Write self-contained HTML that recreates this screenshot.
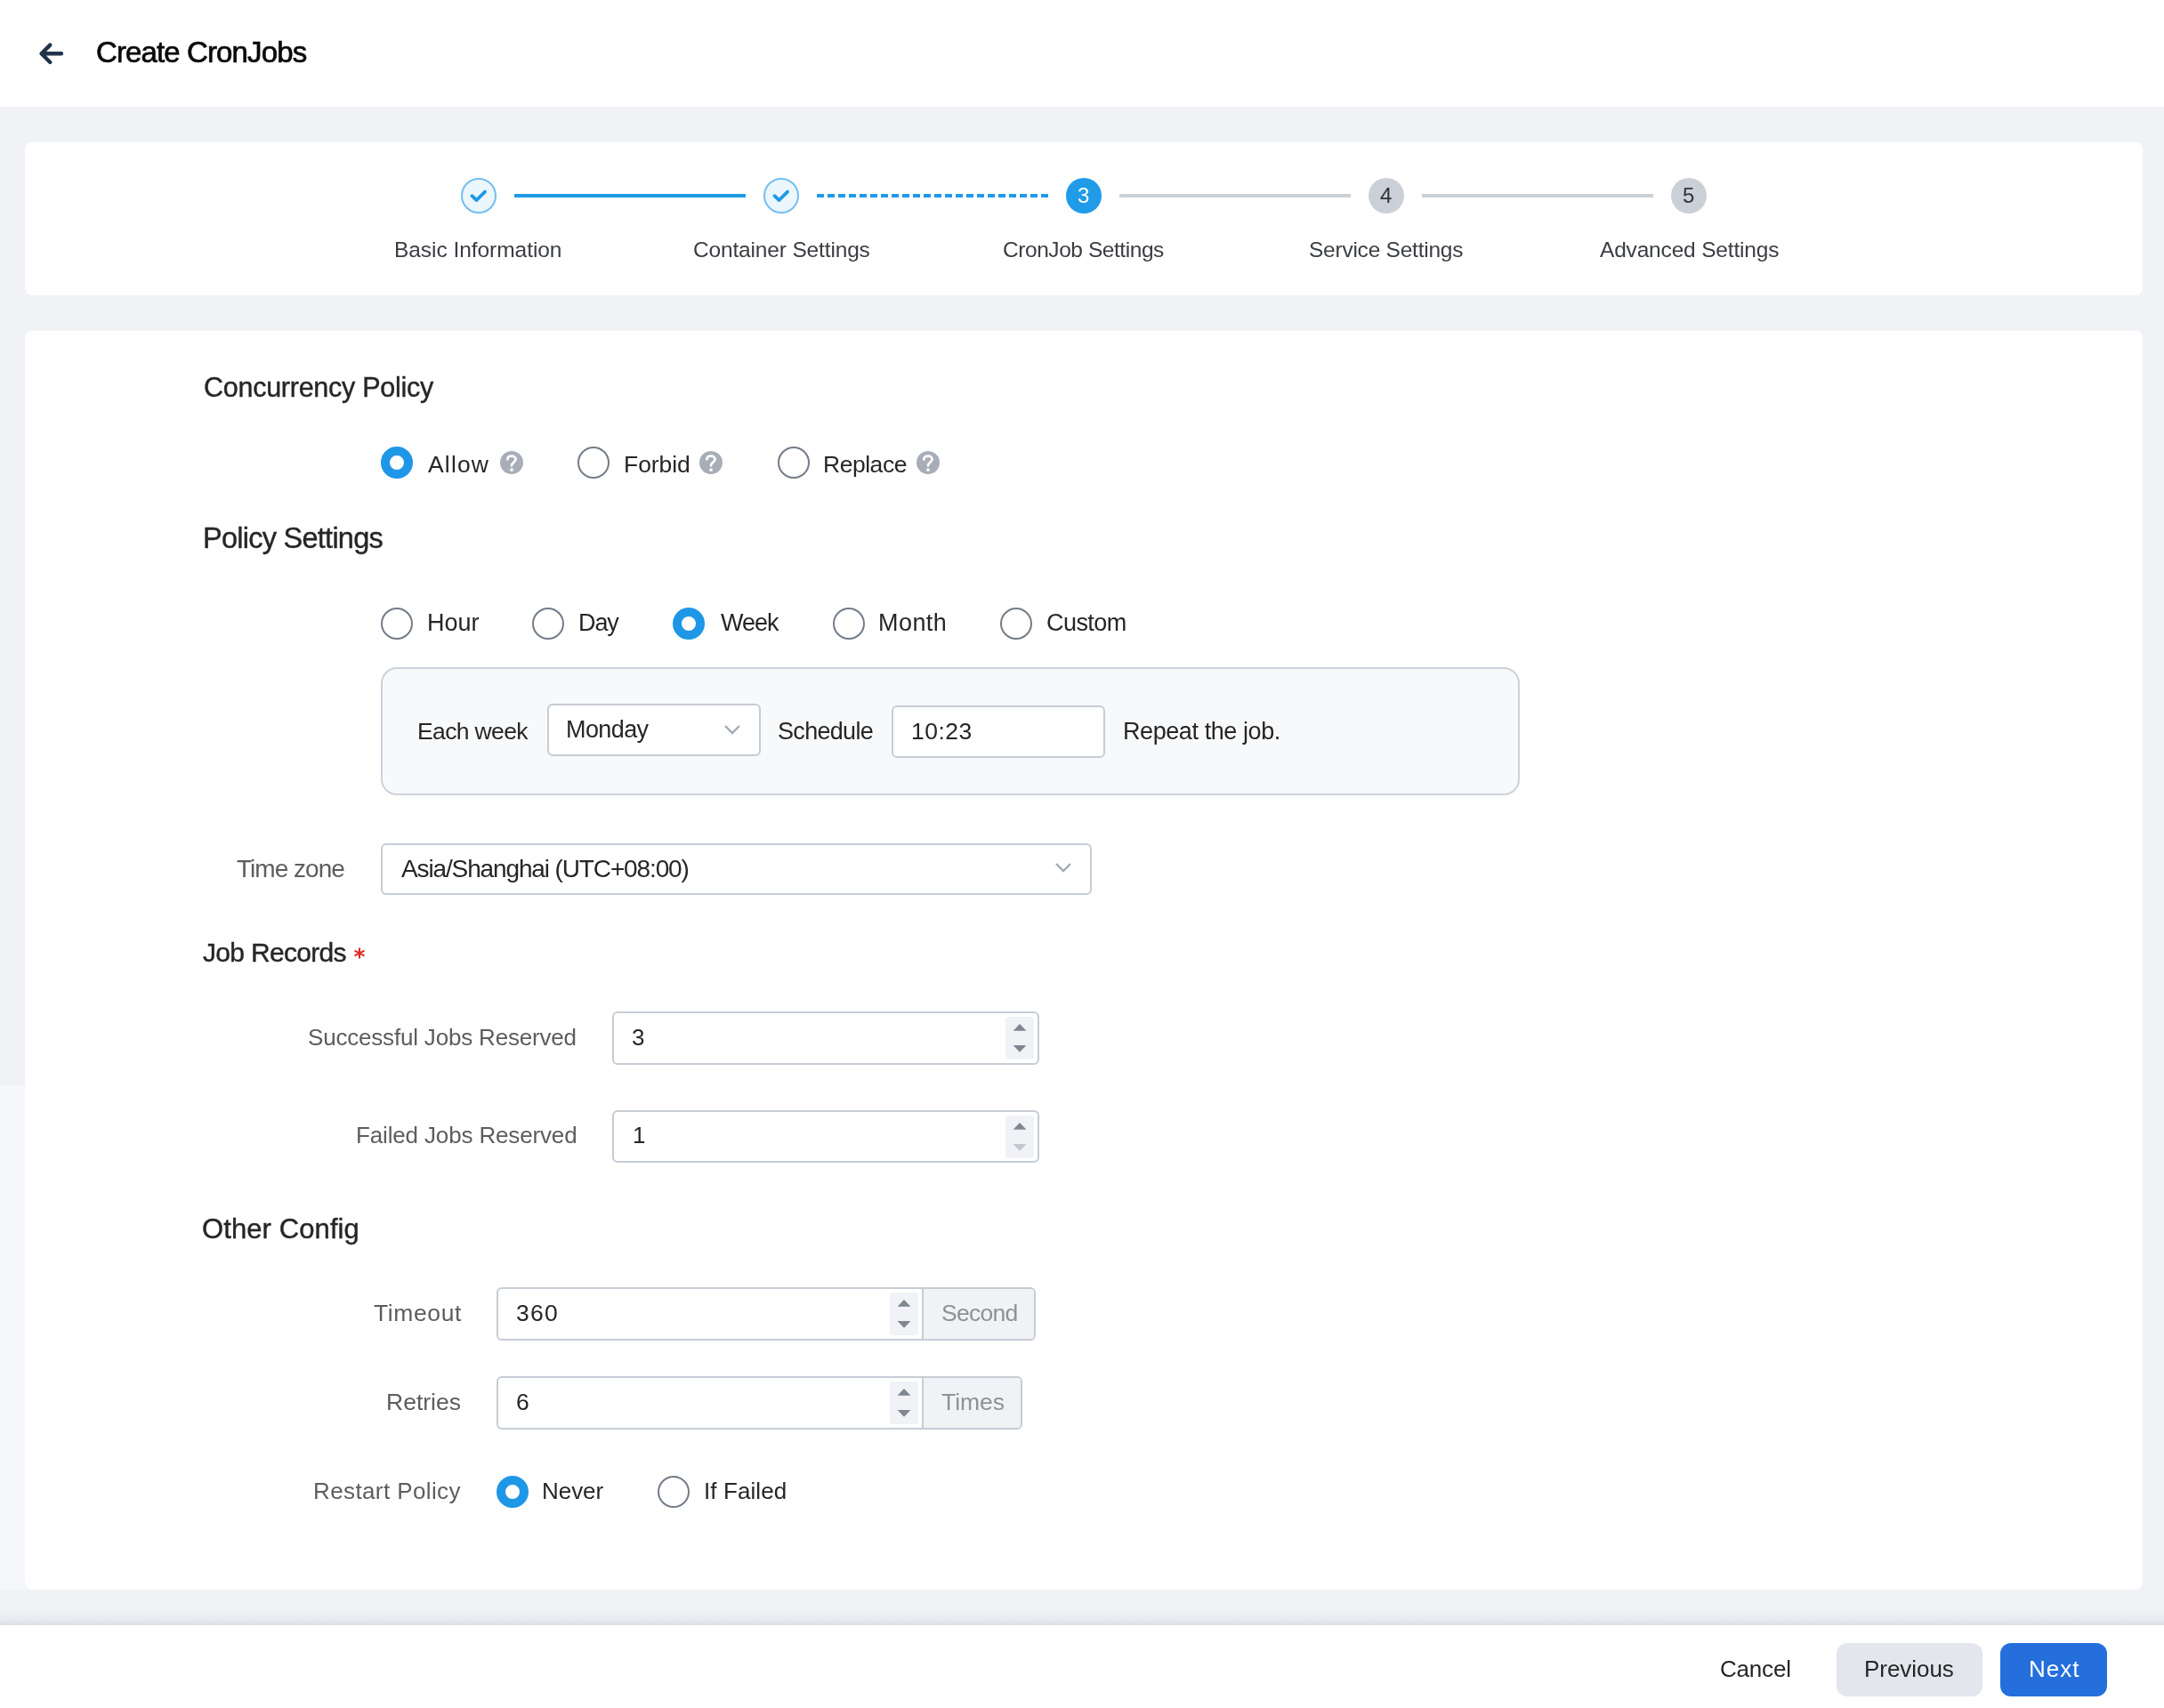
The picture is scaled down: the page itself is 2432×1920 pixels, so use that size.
<!DOCTYPE html>
<html><head><meta charset="utf-8"><title>Create CronJobs</title>
<style>
html,body{margin:0;padding:0}
body{width:2432px;height:1920px;position:relative;overflow:hidden;background:#f0f2f6;font-family:"Liberation Sans",sans-serif}
.abs{position:absolute;box-sizing:content-box}
.t{position:absolute;line-height:1;white-space:nowrap;will-change:transform}
.hdr{position:absolute;left:0;top:0;width:2432px;height:120px;background:#fff}
.card{position:absolute;left:28px;width:2380px;background:#fff;border-radius:8px}
</style></head><body>
<div class="hdr"></div>
<svg class="abs" style="left:0;top:0" width="120" height="120"><path d="M56.3,50.6 L46.6,60.3 L56.3,70 M46.6,60.3 H69" fill="none" stroke="#1f3349" stroke-width="4.4" stroke-linecap="round" stroke-linejoin="round"/></svg>
<div class="t" style="left:108.4px;top:41.7px;font-size:33.0px;letter-spacing:-0.88px;color:#0a0a0a;-webkit-text-stroke:0.7px #0a0a0a;">Create CronJobs</div>
<div class="card" style="top:160px;height:172px"></div>
<div class="abs" style="left:578px;top:218px;width:260px;height:4px;background:#1f9ae8"></div>
<div class="abs" style="left:918px;top:218px;width:260px;height:4px;background:repeating-linear-gradient(90deg,#1f9ae8 0 8px,transparent 8px 12px)"></div>
<div class="abs" style="left:1258px;top:218px;width:260px;height:4px;background:#cbd0d8"></div>
<div class="abs" style="left:1598px;top:218px;width:260px;height:4px;background:#cbd0d8"></div>
<div class="abs" style="left:518px;top:200px;width:36px;height:36px;border-radius:50%;border:2px solid #74bff0;background:#ecf6fd"></div>
<svg class="abs" style="left:518px;top:200px" width="40" height="40"><path d="M12.4,20.2 L17.6,25 L27,15.6" fill="none" stroke="#1f99e6" stroke-width="3.8" stroke-linecap="round" stroke-linejoin="round"/></svg>
<div class="abs" style="left:858px;top:200px;width:36px;height:36px;border-radius:50%;border:2px solid #74bff0;background:#ecf6fd"></div>
<svg class="abs" style="left:858px;top:200px" width="40" height="40"><path d="M12.4,20.2 L17.6,25 L27,15.6" fill="none" stroke="#1f99e6" stroke-width="3.8" stroke-linecap="round" stroke-linejoin="round"/></svg>
<div class="abs" style="left:1198px;top:200px;width:40px;height:40px;border-radius:50%;background:#209be8"></div>
<div class="abs" style="left:1538px;top:200px;width:40px;height:40px;border-radius:50%;background:#cbd0d8"></div>
<div class="abs" style="left:1878px;top:200px;width:40px;height:40px;border-radius:50%;background:#cbd0d8"></div>
<div class="t" style="left:1211.3px;top:207.7px;font-size:24.0px;color:#ffffff;">3</div>
<div class="t" style="left:1551.3px;top:207.7px;font-size:24.0px;color:#2f3338;">4</div>
<div class="t" style="left:1891.3px;top:207.7px;font-size:24.0px;color:#2f3338;">5</div>
<div class="t" style="left:443.0px;top:268.5px;font-size:24.5px;letter-spacing:-0.05px;color:#3a3d42;">Basic Information</div>
<div class="t" style="left:778.6px;top:268.5px;font-size:24.5px;letter-spacing:-0.16px;color:#3a3d42;">Container Settings</div>
<div class="t" style="left:1127.0px;top:268.5px;font-size:24.5px;letter-spacing:-0.44px;color:#3a3d42;">CronJob Settings</div>
<div class="t" style="left:1470.6px;top:268.5px;font-size:24.5px;letter-spacing:-0.24px;color:#3a3d42;">Service Settings</div>
<div class="t" style="left:1797.8px;top:268.5px;font-size:24.5px;letter-spacing:-0.18px;color:#3a3d42;">Advanced Settings</div>
<div class="card" style="top:372px;height:1415px"></div>
<div class="abs" style="left:0;top:1220px;width:28px;height:567px;background:#f5f7fb"></div>
<div class="t" style="left:228.6px;top:420.2px;font-size:30.5px;letter-spacing:-0.26px;color:#262626;-webkit-text-stroke:0.4px #262626;">Concurrency Policy</div>
<div class="abs" style="left:428.0px;top:502.0px;width:16px;height:16px;border-radius:50%;border:10px solid #1f97e7;background:#fff"></div>
<div class="t" style="left:481.4px;top:508.6px;font-size:26.5px;letter-spacing:1.17px;color:#262626;">Allow</div>
<svg class="abs" style="left:562.0px;top:506.7px" width="26" height="26"><circle cx="13" cy="13" r="13" fill="#a8aeb7"/><path d="M8.3,9.3 C8.5,7.1 10.4,5.7 13,5.7 C15.7,5.7 17.6,7.2 17.6,9.3 C17.6,11.4 15.8,12.2 14.5,13.4 C13.4,14.4 13,15.2 13,16.3" fill="none" stroke="#fff" stroke-width="2.7" stroke-linecap="round"/><circle cx="13" cy="21.1" r="1.9" fill="#fff"/></svg>
<div class="abs" style="left:649.0px;top:502.0px;width:32px;height:32px;border-radius:50%;border:2px solid #737c88;background:#fff"></div>
<div class="t" style="left:700.6px;top:508.6px;font-size:26.5px;letter-spacing:-0.06px;color:#262626;">Forbid</div>
<svg class="abs" style="left:786.4px;top:506.7px" width="26" height="26"><circle cx="13" cy="13" r="13" fill="#a8aeb7"/><path d="M8.3,9.3 C8.5,7.1 10.4,5.7 13,5.7 C15.7,5.7 17.6,7.2 17.6,9.3 C17.6,11.4 15.8,12.2 14.5,13.4 C13.4,14.4 13,15.2 13,16.3" fill="none" stroke="#fff" stroke-width="2.7" stroke-linecap="round"/><circle cx="13" cy="21.1" r="1.9" fill="#fff"/></svg>
<div class="abs" style="left:874.0px;top:502.0px;width:32px;height:32px;border-radius:50%;border:2px solid #737c88;background:#fff"></div>
<div class="t" style="left:925.4px;top:508.6px;font-size:26.5px;letter-spacing:-0.47px;color:#262626;">Replace</div>
<svg class="abs" style="left:1030.2px;top:506.7px" width="26" height="26"><circle cx="13" cy="13" r="13" fill="#a8aeb7"/><path d="M8.3,9.3 C8.5,7.1 10.4,5.7 13,5.7 C15.7,5.7 17.6,7.2 17.6,9.3 C17.6,11.4 15.8,12.2 14.5,13.4 C13.4,14.4 13,15.2 13,16.3" fill="none" stroke="#fff" stroke-width="2.7" stroke-linecap="round"/><circle cx="13" cy="21.1" r="1.9" fill="#fff"/></svg>
<div class="t" style="left:227.6px;top:588.7px;font-size:32.5px;letter-spacing:-0.74px;color:#262626;-webkit-text-stroke:0.4px #262626;">Policy Settings</div>
<div class="abs" style="left:428.0px;top:683.0px;width:32px;height:32px;border-radius:50%;border:2px solid #737c88;background:#fff"></div>
<div class="t" style="left:479.6px;top:686.9px;font-size:27.0px;letter-spacing:-0.03px;color:#262626;">Hour</div>
<div class="abs" style="left:598.0px;top:683.0px;width:32px;height:32px;border-radius:50%;border:2px solid #737c88;background:#fff"></div>
<div class="t" style="left:650.2px;top:686.9px;font-size:27.0px;letter-spacing:-1.10px;color:#262626;">Day</div>
<div class="abs" style="left:756.0px;top:683.0px;width:16px;height:16px;border-radius:50%;border:10px solid #1f97e7;background:#fff"></div>
<div class="t" style="left:809.6px;top:686.9px;font-size:27.0px;letter-spacing:-1.01px;color:#262626;">Week</div>
<div class="abs" style="left:936.0px;top:683.0px;width:32px;height:32px;border-radius:50%;border:2px solid #737c88;background:#fff"></div>
<div class="t" style="left:987.0px;top:686.9px;font-size:27.0px;letter-spacing:0.45px;color:#262626;">Month</div>
<div class="abs" style="left:1124.0px;top:683.0px;width:32px;height:32px;border-radius:50%;border:2px solid #737c88;background:#fff"></div>
<div class="t" style="left:1176.2px;top:686.9px;font-size:27.0px;letter-spacing:-0.56px;color:#262626;">Custom</div>
<div class="abs" style="left:428px;top:750px;width:1276px;height:140px;border:2px solid #cdd2da;border-radius:18px;background:#f8f9fb"></div>
<div class="t" style="left:468.8px;top:808.6px;font-size:26.5px;letter-spacing:-0.64px;color:#262626;">Each week</div>
<div class="abs" style="left:615px;top:791px;width:236px;height:55px;border:2px solid #c6ccd5;border-radius:6px;background:#fff"></div>
<div class="t" style="left:635.6px;top:807.1px;font-size:27.0px;letter-spacing:-0.60px;color:#262626;">Monday</div>
<svg class="abs" style="left:810px;top:810px" width="26" height="20"><path d="M5,6 L13,14 L21,6" fill="none" stroke="#a3aab4" stroke-width="2.4"/></svg>
<div class="t" style="left:873.8px;top:808.9px;font-size:27.0px;letter-spacing:-0.69px;color:#262626;">Schedule</div>
<div class="abs" style="left:1002px;top:793px;width:236px;height:55px;border:2px solid #c6ccd5;border-radius:6px;background:#fff"></div>
<div class="t" style="left:1024.2px;top:809.4px;font-size:26.5px;letter-spacing:0.51px;color:#262626;">10:23</div>
<div class="t" style="left:1261.6px;top:808.9px;font-size:27.0px;letter-spacing:-0.42px;color:#262626;">Repeat the job.</div>
<div class="t" style="left:266.0px;top:962.7px;font-size:28.0px;letter-spacing:-0.98px;color:#5c5d60;">Time zone</div>
<div class="abs" style="left:428px;top:948px;width:795px;height:54px;border:2px solid #c6ccd5;border-radius:6px;background:#fff"></div>
<div class="t" style="left:451.2px;top:962.7px;font-size:28.0px;letter-spacing:-1.13px;color:#262626;">Asia/Shanghai (UTC+08:00)</div>
<svg class="abs" style="left:1182px;top:965px" width="26" height="20"><path d="M5,6 L13,14 L21,6" fill="none" stroke="#a3aab4" stroke-width="2.4"/></svg>
<div class="t" style="left:227.6px;top:1055.6px;font-size:30.0px;letter-spacing:-0.68px;color:#262626;-webkit-text-stroke:0.4px #262626;">Job Records</div>
<svg class="abs" style="left:396px;top:1064px" width="16" height="15"><g stroke="#e02a2a" stroke-width="2.1" stroke-linecap="butt"><path d="M8,1.5 V13.5"/><path d="M2.5,4.6 L13.5,10.4"/><path d="M2.5,10.4 L13.5,4.6"/></g></svg>
<div class="t" style="left:346.0px;top:1153.0px;font-size:26.0px;letter-spacing:-0.19px;color:#5c5d60;">Successful Jobs Reserved</div>
<div class="abs" style="left:688px;top:1137px;width:476px;height:56px;border:2px solid #c6ccd5;border-radius:6px;background:#fff"></div>
<div class="abs" style="left:1130px;top:1143px;width:32px;height:48px;border-radius:4px;background:#f1f2f6"></div><svg class="abs" style="left:1130px;top:1143px" width="32" height="48"><path d="M8.6,15.8 L16,8 L23.4,15.8 Z" fill="#7f8790"/><path d="M8.6,32 L16,39.8 L23.4,32 Z" fill="#7f8790"/></svg>
<div class="t" style="left:710.1px;top:1153.0px;font-size:26.0px;letter-spacing:0.00px;color:#262626;">3</div>
<div class="t" style="left:399.8px;top:1263.0px;font-size:26.0px;letter-spacing:-0.15px;color:#5c5d60;">Failed Jobs Reserved</div>
<div class="abs" style="left:688px;top:1248px;width:476px;height:55px;border:2px solid #c6ccd5;border-radius:6px;background:#fff"></div>
<div class="abs" style="left:1130px;top:1254px;width:32px;height:48px;border-radius:4px;background:#f1f2f6"></div><svg class="abs" style="left:1130px;top:1254px" width="32" height="48"><path d="M8.6,15.8 L16,8 L23.4,15.8 Z" fill="#7f8790"/><path d="M8.6,32 L16,39.8 L23.4,32 Z" fill="#c3c8cf"/></svg>
<div class="t" style="left:710.5px;top:1263.0px;font-size:26.0px;letter-spacing:0.00px;color:#262626;">1</div>
<div class="t" style="left:227.4px;top:1366.0px;font-size:31.0px;letter-spacing:0.10px;color:#262626;-webkit-text-stroke:0.4px #262626;">Other Config</div>
<div class="abs" style="left:558px;top:1447px;width:602px;height:56px;border:2px solid #c6ccd5;border-radius:6px;background:#fff;overflow:hidden"><div style="position:absolute;left:476px;top:0;width:128px;height:56px;background:#f1f2f6;border-left:2px solid #c6ccd5"></div></div>
<div class="abs" style="left:1000px;top:1453px;width:32px;height:48px;border-radius:4px;background:#f1f2f6"></div><svg class="abs" style="left:1000px;top:1453px" width="32" height="48"><path d="M8.6,15.8 L16,8 L23.4,15.8 Z" fill="#7f8790"/><path d="M8.6,32 L16,39.8 L23.4,32 Z" fill="#7f8790"/></svg>
<div class="t" style="left:419.6px;top:1462.6px;font-size:26.5px;letter-spacing:0.61px;color:#5c5d60;">Timeout</div>
<div class="t" style="left:580.4px;top:1462.6px;font-size:26.5px;letter-spacing:1.27px;color:#262626;">360</div>
<div class="t" style="left:1058.0px;top:1463.0px;font-size:26.5px;letter-spacing:-0.74px;color:#8f9194;">Second</div>
<div class="abs" style="left:558px;top:1547px;width:587px;height:56px;border:2px solid #c6ccd5;border-radius:6px;background:#fff;overflow:hidden"><div style="position:absolute;left:476px;top:0;width:113px;height:56px;background:#f1f2f6;border-left:2px solid #c6ccd5"></div></div>
<div class="abs" style="left:1000px;top:1553px;width:32px;height:48px;border-radius:4px;background:#f1f2f6"></div><svg class="abs" style="left:1000px;top:1553px" width="32" height="48"><path d="M8.6,15.8 L16,8 L23.4,15.8 Z" fill="#7f8790"/><path d="M8.6,32 L16,39.8 L23.4,32 Z" fill="#7f8790"/></svg>
<div class="t" style="left:433.8px;top:1563.4px;font-size:26.5px;letter-spacing:0.00px;color:#5c5d60;">Retries</div>
<div class="t" style="left:580.0px;top:1563.4px;font-size:26.5px;letter-spacing:0.00px;color:#262626;">6</div>
<div class="t" style="left:1058.0px;top:1563.4px;font-size:26.5px;letter-spacing:-0.03px;color:#8f9194;">Times</div>
<div class="t" style="left:351.8px;top:1663.0px;font-size:26.0px;letter-spacing:0.39px;color:#5c5d60;">Restart Policy</div>
<div class="abs" style="left:557.9px;top:1658.8px;width:16px;height:16px;border-radius:50%;border:10px solid #1f97e7;background:#fff"></div>
<div class="t" style="left:608.8px;top:1663.0px;font-size:26.0px;letter-spacing:-0.04px;color:#262626;">Never</div>
<div class="abs" style="left:739.0px;top:1658.8px;width:32px;height:32px;border-radius:50%;border:2px solid #737c88;background:#fff"></div>
<div class="t" style="left:790.6px;top:1663.0px;font-size:26.0px;letter-spacing:0.09px;color:#262626;">If Failed</div>
<div class="abs" style="left:0;top:1809px;width:2432px;height:18px;background:linear-gradient(180deg,rgba(20,30,50,0) 0%,rgba(20,30,50,0.03) 60%,rgba(20,30,50,0.09) 100%)"></div>
<div class="abs" style="left:0;top:1827px;width:2432px;height:93px;background:#fff"></div>
<div class="abs" style="left:2064px;top:1847px;width:164px;height:60px;border-radius:12px;background:#e3e6ed"></div>
<div class="abs" style="left:2248px;top:1847px;width:120px;height:60px;border-radius:12px;background:#246fdc"></div>
<div class="t" style="left:1933.0px;top:1863.0px;font-size:26.0px;letter-spacing:-0.20px;color:#262626;">Cancel</div>
<div class="t" style="left:2095.0px;top:1863.0px;font-size:26.0px;letter-spacing:-0.05px;color:#262626;">Previous</div>
<div class="t" style="left:2279.6px;top:1863.0px;font-size:26.0px;letter-spacing:0.97px;color:#ffffff;">Next</div>
</body></html>
